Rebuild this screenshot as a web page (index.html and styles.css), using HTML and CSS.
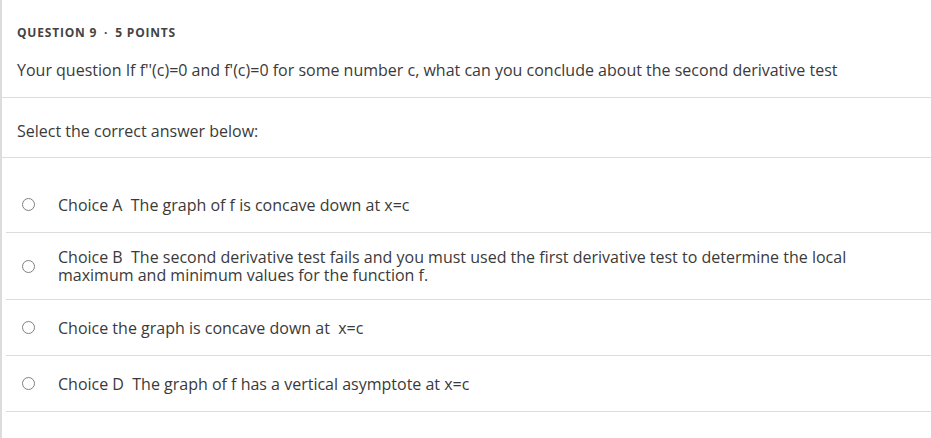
FILE: index.html
```html
<!DOCTYPE html>
<html>
<head>
<meta charset="utf-8">
<link rel="stylesheet" href="styles.css">
</head>
<body>
<div class="question">
  <div class="q-head">
    <div class="q-meta">Question 9 <span class="dot">·</span> 5 Points</div>
    <div class="q-text">Your question If f''(c)=0 and f'(c)=0 for some number c, what can you conclude about the second derivative test</div>
  </div>
  <div class="q-prompt">Select the correct answer below:</div>
  <div class="choices">
    <label class="choice"><span class="radio"></span><span class="c-text">Choice A&nbsp; The graph of f is concave down at x=c</span></label>
    <label class="choice"><span class="radio"></span><span class="c-text">Choice B&nbsp; The second derivative test fails and you must used the first derivative test to determine the local maximum and minimum values for the function f.</span></label>
    <label class="choice"><span class="radio"></span><span class="c-text">Choice the graph is concave down at&nbsp; x=c</span></label>
    <label class="choice"><span class="radio"></span><span class="c-text">Choice D&nbsp; The graph of f has a vertical asymptote at x=c</span></label>
  </div>
</div>
</body>
</html>
```

FILE: styles.css
```css
html, body {
  margin: 0;
  padding: 0;
  background: #fff;
}
body {
  font-family: "Open Sans", "Liberation Sans", sans-serif;
  color: #3a3a3a;
}
.question {
  border-left: 2px solid #dcdcdc;
  min-height: 438px;
  box-sizing: border-box;
}
.q-head {
  padding: 25px 16px 17px 15px;
  border-bottom: 1px solid #dcdcdc;
}
.q-meta {
  font-size: 12px;
  font-weight: 700;
  text-transform: uppercase;
  letter-spacing: 0.8px;
  color: #444;
  line-height: 16px;
}
.q-meta .dot {
  margin: 0 3px;
}
.q-text {
  margin-top: 19px;
  font-size: 16px;
  line-height: 20px;
}
.q-prompt {
  padding: 23px 16px 16px 15px;
  font-size: 16px;
  line-height: 20px;
  border-bottom: 1px solid #dcdcdc;
}
.choices {
  margin-left: 4px;
  padding-top: 19px;
}
.choice {
  display: flex;
  align-items: center;
  min-height: 56px;
  padding: 15px 0;
  box-sizing: border-box;
  border-bottom: 1px solid #dcdcdc;
  font-size: 16px;
  line-height: 18px;
}
.radio {
  flex: none;
  width: 11px;
  height: 11px;
  border: 1px solid #808080;
  border-radius: 50%;
  margin-left: 16px;
  margin-right: 23px;
}
.c-text {
  padding-right: 70px;
}
```
